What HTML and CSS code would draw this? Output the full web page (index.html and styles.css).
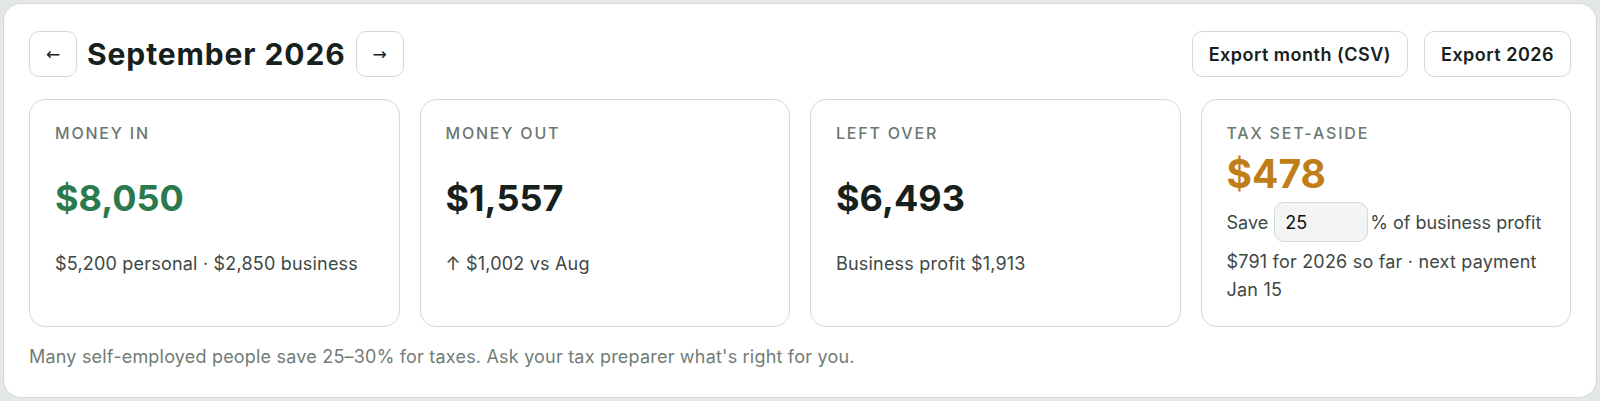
FILE: index.html
```html
<!DOCTYPE html>
<html lang="en">
<head>
<meta charset="utf-8">
<title>September 2026</title>
<link rel="stylesheet" href="styles.css">
</head>
<body>
<div class="panel">
  <div class="header">
    <div class="month-nav">
      <button class="nav-btn" type="button">←</button>
      <h1 class="month-title">September 2026</h1>
      <button class="nav-btn" type="button">→</button>
    </div>
    <div class="exports">
      <button class="export-btn" type="button">Export month (CSV)</button>
      <button class="export-btn" type="button">Export 2026</button>
    </div>
  </div>
  <div class="cards">
    <div class="card">
      <div class="label">MONEY IN</div>
      <div class="value value-green spaced">$8,050</div>
      <div class="sub sub-spaced">$5,200 personal · $2,850 business</div>
    </div>
    <div class="card">
      <div class="label">MONEY OUT</div>
      <div class="value spaced">$1,557</div>
      <div class="sub sub-spaced">↑ $1,002 vs Aug</div>
    </div>
    <div class="card">
      <div class="label">LEFT OVER</div>
      <div class="value spaced">$6,493</div>
      <div class="sub sub-spaced">Business profit $1,913</div>
    </div>
    <div class="card">
      <div class="label">TAX SET-ASIDE</div>
      <div class="value value-orange tight">$478</div>
      <div class="save-row">
        <span>Save</span>
        <input class="pct-input" type="text" value="25">
        <span>% of business profit</span>
      </div>
      <div class="sub sub-tax">$791 for 2026 so far · next payment Jan 15</div>
    </div>
  </div>
  <p class="note">Many self-employed people save 25–30% for taxes. Ask your tax preparer what's right for you.</p>
</div>
</body>
</html>
```

FILE: styles.css
```css
html, body {
  margin: 0;
  padding: 0;
}
body {
  background: #e3e8e5;
  padding: 3px;
  height: 401px;
  box-sizing: border-box;
  font-family: Inter, "Noto Sans", "Liberation Sans", sans-serif;
  color: #17211c;
}
.panel {
  box-sizing: border-box;
  height: 395px;
  background: #ffffff;
  border: 1px solid #d3dad6;
  border-radius: 18px;
  padding: 27px 25px 0 25px;
}
.header {
  display: flex;
  justify-content: space-between;
  align-items: center;
  height: 46px;
}
.month-nav {
  display: flex;
  align-items: center;
  gap: 10px;
}
.nav-btn {
  width: 48px;
  height: 46px;
  border: 1px solid #d3dad6;
  border-radius: 10px;
  background: #fff;
  font-family: "DejaVu Sans", sans-serif;
  font-size: 17px;
  color: #17211c;
  padding: 0;
  display: flex;
  align-items: center;
  justify-content: center;
}
.month-title {
  margin: 0;
  font-size: 30px;
  font-weight: 700;
  letter-spacing: 0.9px;
  color: #17211c;
}
.exports {
  display: flex;
  gap: 16px;
}
.export-btn {
  height: 46px;
  padding: 0 16px;
  border: 1px solid #d3dad6;
  border-radius: 10px;
  background: #fff;
  font-family: Inter, "Noto Sans", sans-serif;
  font-size: 18px;
  font-weight: 600;
  letter-spacing: 0.5px;
  color: #17211c;
}
.cards {
  display: grid;
  grid-template-columns: repeat(4, 1fr);
  gap: 20px;
  margin-top: 22px;
}
.card {
  border: 1px solid #d3dad6;
  border-radius: 16px;
  padding: 23px 25px 22px 25px;
}
.label {
  font-size: 16px;
  line-height: 20px;
  letter-spacing: 1.8px;
  font-weight: 500;
  color: #6b7872;
}
.value {
  font-size: 36px;
  line-height: 44px;
  font-weight: 700;
  color: #17211c;
}
.value.spaced { margin-top: 33px; }
.value.tight {
  margin-top: 9px;
  font-size: 39px;
}
.value-green { color: #2a7a4d; }
.value-orange { color: #bf7e18; }
.sub {
  font-size: 18px;
  line-height: 28px;
  letter-spacing: 0.2px;
  color: #3e4844;
}
.sub-spaced { margin-top: 30px; }
.sub-tax { margin-top: 6px; }
.save-row {
  margin-top: 6px;
  display: flex;
  align-items: center;
  height: 40px;
  font-size: 18px;
  white-space: nowrap;
  color: #3e4844;
}
.pct-input {
  box-sizing: border-box;
  flex: none;
  width: 94px;
  height: 40px;
  margin: 0 2px 0 6px;
  padding: 0 10px;
  border: 1px solid #d3dad6;
  border-radius: 10px;
  background: #f3f5f4;
  font-family: Inter, "Noto Sans", sans-serif;
  font-size: 18px;
  color: #111;
}
.note {
  margin: 18px 0 0 0;
  font-size: 18px;
  line-height: 24px;
  letter-spacing: 0.2px;
  color: #717c76;
}
```
